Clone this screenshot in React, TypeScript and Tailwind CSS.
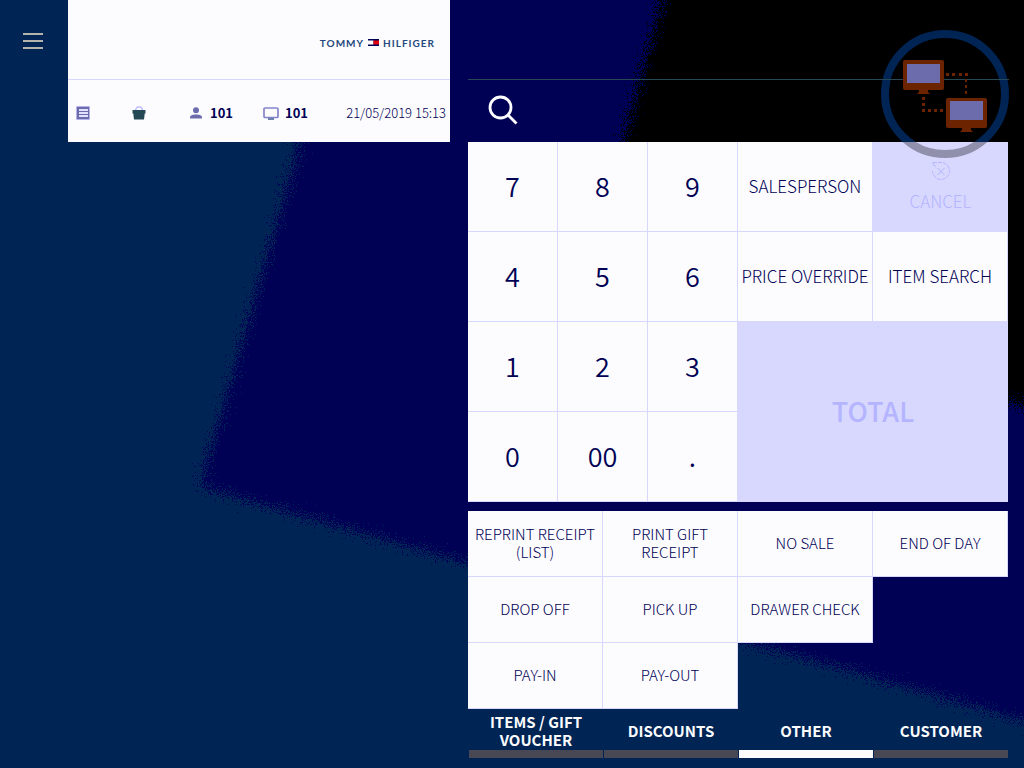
import React, { useState } from "react";

const digits = ["7", "8", "9", "4", "5", "6", "1", "2", "3", "0", "00", "."];

const functions = [
  "REPRINT RECEIPT (LIST)",
  "PRINT GIFT RECEIPT",
  "NO SALE",
  "END OF DAY",
  "DROP OFF",
  "PICK UP",
  "DRAWER CHECK",
  "",
  "PAY-IN",
  "PAY-OUT",
];

const tabs = ["ITEMS / GIFT VOUCHER", "DISCOUNTS", "OTHER", "CUSTOMER"];

function Backdrop() {
  return (
    <svg
      className="absolute inset-0 -z-10 h-full w-full"
      viewBox="0 0 1024 768"
      preserveAspectRatio="none"
      aria-hidden="true"
    >
      <defs>
        <filter id="grain" filterUnits="userSpaceOnUse" x="0" y="-100" width="1200" height="1000">
          <feTurbulence type="fractalNoise" baseFrequency="0.9" numOctaves="2" seed="4" />
          <feDisplacementMap in="SourceGraphic" scale="44" xChannelSelector="R" yChannelSelector="G" />
        </filter>
      </defs>
      <rect width="1024" height="768" fill="#002454" />
      <g filter="url(#grain)" shapeRendering="crispEdges">
        <path d="M370 -100 L200 487 L1100 742 V-100 Z" fill="#000054" />
        <path d="M689 -100 L583 285 L1100 427 V-100 Z" fill="#000000" />
      </g>
    </svg>
  );
}

function NetworkBadge() {
  return (
    <svg
      className="pointer-events-none absolute -right-px top-[30px] h-32 w-32"
      viewBox="0 0 128 128"
      role="img"
      aria-label="Network status"
    >
      <defs>
        <clipPath id="ring-top">
          <rect width="128" height="112" />
        </clipPath>
        <clipPath id="ring-bottom">
          <rect y="112" width="128" height="16" />
        </clipPath>
      </defs>
      <circle cx="64" cy="64" r="60" fill="none" stroke="#002454" strokeWidth="8" clipPath="url(#ring-top)" />
      <circle cx="64" cy="64" r="60" fill="none" stroke="#9090ac" strokeWidth="8" clipPath="url(#ring-bottom)" />
      <path d="M0 49.500H128" stroke="#244854" />
      <g fill="#6c2400">
        <rect x="22" y="30" width="41" height="30" rx="2" />
        <path d="M38 60h9v2l2 2H36l2-2z" />
        <rect x="65" y="68" width="41" height="30" rx="2" />
        <path d="M81 98h9v2l2 2H79l2-2z" />
        <path d="M65 43h3v3h-3zM71 43h3v3h-3zM78 43h3v3h-3zM84 43h3v3h-3zM84 49h2v3h-2zM84 55h2v3h-2zM84 61h2v3h-2z" />
        <path d="M41 67h3v3h-3zM41 73h3v3h-3zM41 79h3v3h-3zM47 79h3v3h-3zM53 79h3v3h-3zM59 79h3v3h-3z" />
      </g>
      <rect x="26" y="34" width="33" height="19" fill="#6c6cac" />
      <rect x="69" y="71" width="33" height="19" fill="#6c6cac" />
    </svg>
  );
}

function Logo() {
  return (
    <div className="flex items-center gap-1 font-[Lato,sans-serif] text-[10px] leading-3 font-bold tracking-widest text-[#24487c]">
      <span>TOMMY</span>
      <svg className="h-[7px] w-[11px]" viewBox="0 0 11 7" aria-hidden="true">
        <rect width="11" height="7" fill="#000054" />
        <rect y="1.500" width="5.500" height="4" fill="#fcfcff" />
        <rect x="5.500" y="1.500" width="5.500" height="4" fill="#e00010" />
      </svg>
      <span>HILFIGER</span>
    </div>
  );
}

function ReceiptIcon() {
  return (
    <svg className="h-3.5 w-3.5" viewBox="0 0 14 14" aria-hidden="true">
      <rect x=".5" y=".5" width="13" height="13" fill="#6c6cac" stroke="#b4b4ff" strokeDasharray="1 1" />
      <path d="M3 4h9M3 7h9M3 10h9" stroke="#e0e0ff" strokeWidth="2" />
    </svg>
  );
}

function BasketIcon() {
  return (
    <svg className="h-3.5 w-3.5" viewBox="0 0 14 14" aria-hidden="true">
      <path d="M3.500 5C3.500 -.5 10.500 -.5 10.500 5" fill="none" stroke="#b4b4ff" strokeWidth="1.300" />
      <path d="M.5 4h13v3.500h-.8L12 13.500H2L1.300 7.500H.5z" fill="#244854" />
    </svg>
  );
}

function PersonIcon() {
  return (
    <svg className="h-3 w-3" viewBox="0 0 12 12" aria-hidden="true">
      <circle cx="6" cy="3.200" r="3" fill="#6c6cac" />
      <path d="M0 11.500v-1.500C0 6.500 12 6.500 12 10v1.500z" fill="#6c6cac" />
    </svg>
  );
}

function MonitorIcon() {
  return (
    <svg className="h-[13px] w-4" viewBox="0 0 16 13" aria-hidden="true">
      <rect x="1" y="1" width="14" height="9.500" rx="1" fill="none" stroke="#8484cc" strokeWidth="1.700" />
      <path d="M5 11h6v2H5z" fill="#6c84ac" />
    </svg>
  );
}

function CancelIcon() {
  return (
    <svg className="h-5 w-5" viewBox="0 0 20 20" fill="none" stroke="#b4b4ff" aria-hidden="true">
      <path d="M2 1.500h9A8.500 8.500 0 1 1 1.500 10" strokeDasharray="4 1" />
      <path d="M2 1.500v2l3 2M6.500 7l7 7M13.500 7l-7 7" />
    </svg>
  );
}

const keyBase =
  "flex items-center justify-center border-r border-b border-[#d8d8ff] bg-[#fcfcff] pb-0.5 text-center text-[#000054]";

export default function App() {
  const [active, setActive] = useState("OTHER");

  return (
    <div className="relative isolate flex min-h-screen overflow-hidden pr-4 font-['Noto_Sans_CJK_SC',sans-serif]">
      <Backdrop />

      <nav className="w-17 shrink-0 pt-[33px] pl-[23px]">
        <button type="button" aria-label="Menu" className="flex flex-col gap-[5px]">
          <span className="h-0.5 w-5 bg-[#b4b4ac]" />
          <span className="h-0.5 w-5 bg-[#b4b4ac]" />
          <span className="h-0.5 w-5 bg-[#b4b4ac]" />
        </button>
      </nav>

      <section className="min-w-0 flex-[382_1_0%]">
        <div className="bg-[#fcfcff]">
          <header className="flex h-20 items-center justify-end border-b border-[#d8d8ff] pt-1.5 pr-[15px]">
            <Logo />
          </header>
          <div className="flex h-[62px] items-center pt-1 pr-1 pl-2 text-[13px] leading-4 text-[#000054]">
            <div className="w-14">
              <ReceiptIcon />
            </div>
            <div className="w-[58px]">
              <BasketIcon />
            </div>
            <div className="flex w-[73px] items-center gap-2">
              <PersonIcon />
              <b>101</b>
            </div>
            <div className="flex items-center gap-1.5">
              <MonitorIcon />
              <b>101</b>
            </div>
            <time className="ml-auto whitespace-nowrap font-light">21/05/2019 15:13</time>
          </div>
        </div>
      </section>

      <main className="relative ml-[18px] flex min-w-0 flex-[540_1_0%] flex-col">
        <div className="h-20 border-b border-[#244854]" />
        <label className="flex h-[62px] items-center gap-4 pb-0.5 pl-5">
          <svg
            className="h-[30px] w-[30px] shrink-0"
            viewBox="0 0 30 30"
            fill="none"
            stroke="#fcfcff"
            strokeWidth="2.800"
            aria-hidden="true"
          >
            <circle cx="12.500" cy="12.500" r="10.500" />
            <path d="M20 20l8.500 8.500" />
          </svg>
          <input type="text" aria-label="Search" className="h-10 w-full bg-transparent text-lg text-white outline-none" />
        </label>

        <div className="grid grid-cols-2">
          <div className="grid grid-cols-3">
            {digits.map((digit) => (
              <button key={digit} type="button" className={`${keyBase} h-[90px] text-[27px] leading-9 font-[350]`}>
                {digit}
              </button>
            ))}
          </div>
          <div className="grid grid-cols-2 text-[17px] leading-6 font-light">
            <button type="button" className={`${keyBase} h-[90px]`}>
              SALESPERSON
            </button>
            <button
              type="button"
              disabled
              className="flex h-[90px] flex-col items-center justify-center gap-2 bg-[#d8d8ff] text-[#b4b4ff]"
            >
              <CancelIcon />
              CANCEL
            </button>
            <button type="button" className={`${keyBase} h-[90px] whitespace-nowrap`}>
              PRICE OVERRIDE
            </button>
            <button type="button" className={`${keyBase} h-[90px]`}>
              ITEM SEARCH
            </button>
            <button
              type="button"
              disabled
              className="col-span-2 h-[180px] bg-[#d8d8ff] pb-0.5 text-[27px] leading-9 font-medium text-[#b4b4ff]"
            >
              TOTAL
            </button>
          </div>
        </div>

        <div className="mt-[9px] grid grid-cols-4 text-[15px] leading-[18px] font-light">
          {functions.map((label) =>
            label ? (
              <button key={label} type="button" className={`${keyBase} h-[66px] px-1`}>
                {label}
              </button>
            ) : (
              <span key="empty" />
            ),
          )}
        </div>

        <div
          role="tablist"
          className="grid grid-cols-4 gap-px pl-px text-[15px] leading-[18px] font-bold text-[#fcfcff]"
        >
          {tabs.map((tab) => (
            <button
              key={tab}
              type="button"
              role="tab"
              aria-selected={tab === active}
              onClick={() => setActive(tab)}
              className={`flex h-[49px] items-center justify-center border-b-8 px-3 pt-0.5 ${
                tab === active ? "border-[#fcfcff]" : "border-[#484854]"
              }`}
            >
              {tab}
            </button>
          ))}
        </div>

        <NetworkBadge />
      </main>
    </div>
  );
}
